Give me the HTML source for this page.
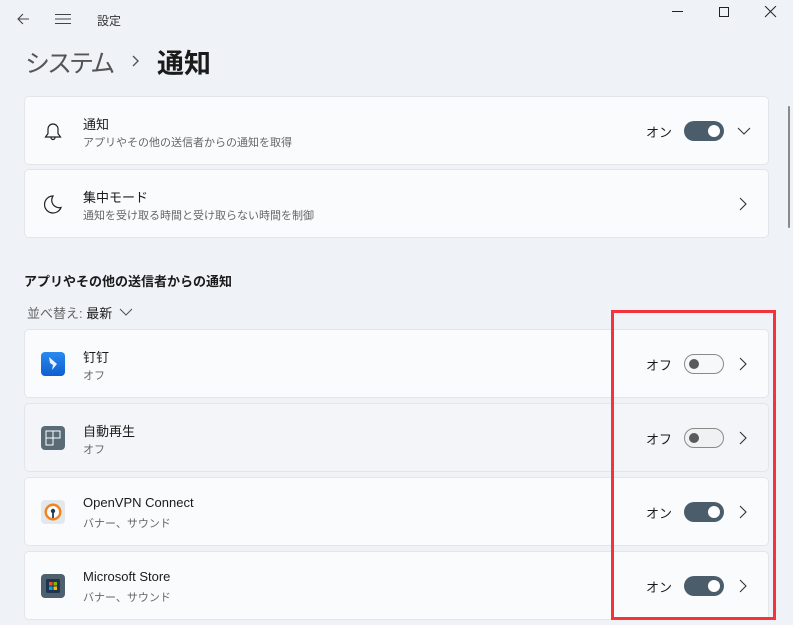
<!DOCTYPE html>
<html><head><meta charset="utf-8"><style>
*{margin:0;padding:0;box-sizing:border-box}
body{width:793px;height:625px;overflow:hidden;background:#eff3f8;font-family:"Liberation Sans","Noto Sans CJK JP",sans-serif;color:#1b1b1b;position:relative}
.abs{position:absolute}
.card{position:absolute;left:24px;width:745px;height:69px;background:#fafbfd;border:1px solid #e2e6eb;border-radius:5px}
.t{position:absolute;left:58px;top:17px;font-size:13px;color:#1b1b1b}
.s{position:absolute;left:58px;top:37px;font-size:11px;color:#666}
.lbl{position:absolute;right:96px;top:25px;font-size:13px}
.tg{position:absolute;left:659px;top:24px;width:40px;height:20px;border-radius:10px}
.on{background:#4b5d6b}
.on::after{content:"";position:absolute;right:4px;top:4px;width:12px;height:12px;border-radius:50%;background:#fff}
.off{border:1px solid #8a8a8a;background:#f7f8fa}
.off::after{content:"";position:absolute;left:4px;top:4px;width:10px;height:10px;border-radius:50%;background:#5a5a5a}
.chev{position:absolute;left:714px;top:27px}
.ic{position:absolute;left:16px;top:22px;width:24px;height:24px;border-radius:4px}
</style></head><body>
<svg class="abs" style="left:16px;top:12px" width="14" height="14" viewBox="0 0 14 14"><path d="M13 7H2M7 2L2 7l5 5" stroke="#444" fill="none" stroke-width="1.1"/></svg>
<svg class="abs" style="left:55px;top:13px" width="16" height="12" viewBox="0 0 16 12"><path d="M0 1.5h16M0 6h16M0 10.5h16" stroke="#444" stroke-width="1.1"/></svg>
<div class="abs" style="left:97px;top:12px;font-size:12px;color:#333">設定</div>
<svg class="abs" style="left:672px;top:6px" width="110" height="12"><path d="M0 5.5h11" stroke="#222"/><path d="M47.5 1.5h9v9h-9z" stroke="#222" fill="none"/><path d="M93 0l11 11M104 0L93 11" stroke="#222"/></svg>
<div class="abs" style="left:25px;top:44px;font-size:25px;letter-spacing:-3px;color:#555">システム</div>
<svg class="abs" style="left:131px;top:55px" width="10" height="12"><path d="M2 1l5 5-5 5" stroke="#555" fill="none" stroke-width="1.4"/></svg>
<div class="abs" style="left:157px;top:42px;font-size:27px;font-weight:bold;color:#1b1b1b">通知</div>
<div class="abs" style="left:788px;top:106px;width:2px;height:122px;background:#8a8a8a;border-radius:1px"></div>

<div class="card" style="top:96px">
<svg class="ic" viewBox="0 0 24 24" style="left:16px"><path d="M4.5 18h15l-2.5-3.5V10a5 5 0 0 0-10 0v4.5zM10 18.5a2 2 0 0 0 4 0" stroke="#222" fill="none" stroke-width="1.2"/></svg>
<div class="t">通知</div><div class="s">アプリやその他の送信者からの通知を取得</div>
<div class="lbl">オン</div><div class="tg on"></div>
<svg class="chev" style="left:712px;top:30px" width="14" height="9"><path d="M1 1l6 6 6-6" stroke="#333" fill="none" stroke-width="1.1"/></svg>
</div>
<div class="card" style="top:169px">
<svg class="ic" viewBox="0 0 24 24" style="left:16px"><path d="M12 4a8.5 8.5 0 1 0 8 11.5A7.5 7.5 0 0 1 12 4z" stroke="#222" fill="none" stroke-width="1.2"/></svg>
<div class="t">集中モード</div><div class="s">通知を受け取る時間と受け取らない時間を制御</div>
<svg class="chev" width="8" height="14"><path d="M1 1l6 6-6 6" stroke="#333" fill="none" stroke-width="1.1"/></svg>
</div>

<div class="abs" style="left:24px;top:271px;font-size:13px;font-weight:bold">アプリやその他の送信者からの通知</div>
<div class="abs" style="left:27px;top:303px;font-size:13px;color:#666">並べ替え: <span style="color:#1b1b1b">最新</span></div>
<svg class="abs" style="left:119px;top:308px" width="14" height="9"><path d="M1 1l6 6 6-6" stroke="#555" fill="none" stroke-width="1.1"/></svg>

<div class="card" style="top:329px">
<div class="ic" style="background:linear-gradient(#2a8af0,#0d5fd0)"><svg width="24" height="24"><path d="M8 5l8 7-5 6 1-5-3-2z" fill="#e8f2ff"/></svg></div>
<div class="t">钉钉</div><div class="s">オフ</div>
<div class="lbl">オフ</div><div class="tg off"></div>
<svg class="chev" width="8" height="14"><path d="M1 1l6 6-6 6" stroke="#333" fill="none" stroke-width="1.1"/></svg>
</div>
<div class="card" style="top:403px;background:#f3f5f8">
<div class="ic" style="background:#5a6b78"><svg width="24" height="24"><path d="M5 5h14v7h-7v7H5zM12 5v7M5 12h7" stroke="#fff" fill="none" stroke-width="1"/></svg></div>
<div class="t">自動再生</div><div class="s">オフ</div>
<div class="lbl">オフ</div><div class="tg off" style="background:#eff1f3"></div>
<svg class="chev" width="8" height="14"><path d="M1 1l6 6-6 6" stroke="#333" fill="none" stroke-width="1.1"/></svg>
</div>
<div class="card" style="top:477px">
<div class="ic" style="background:#e4e8ec"><svg width="24" height="24"><circle cx="12" cy="12" r="8.5" fill="#f08420"/><circle cx="12" cy="12" r="6" fill="#fff"/><circle cx="12" cy="11" r="2.2" fill="#1f3a5f"/><path d="M11.1 11h1.8v7h-1.8z" fill="#1f3a5f"/></svg></div>
<div class="t">OpenVPN Connect</div><div class="s">バナー、サウンド</div>
<div class="lbl">オン</div><div class="tg on"></div>
<svg class="chev" width="8" height="14"><path d="M1 1l6 6-6 6" stroke="#333" fill="none" stroke-width="1.1"/></svg>
</div>
<div class="card" style="top:551px">
<div class="ic" style="background:#4e5f6d"><svg width="24" height="24"><rect x="5" y="5" width="14" height="14" rx="1.5" fill="#1e3450"/><rect x="8" y="8" width="3.5" height="3.5" fill="#f25022"/><rect x="12.5" y="8" width="3.5" height="3.5" fill="#7fba00"/><rect x="8" y="12.5" width="3.5" height="3.5" fill="#00a4ef"/><rect x="12.5" y="12.5" width="3.5" height="3.5" fill="#ffb900"/></svg></div>
<div class="t">Microsoft Store</div><div class="s">バナー、サウンド</div>
<div class="lbl">オン</div><div class="tg on"></div>
<svg class="chev" width="8" height="14"><path d="M1 1l6 6-6 6" stroke="#333" fill="none" stroke-width="1.1"/></svg>
</div>

<div class="abs" style="left:611px;top:310px;width:165px;height:310px;border:3px solid #f4333a"></div>
</body></html>
